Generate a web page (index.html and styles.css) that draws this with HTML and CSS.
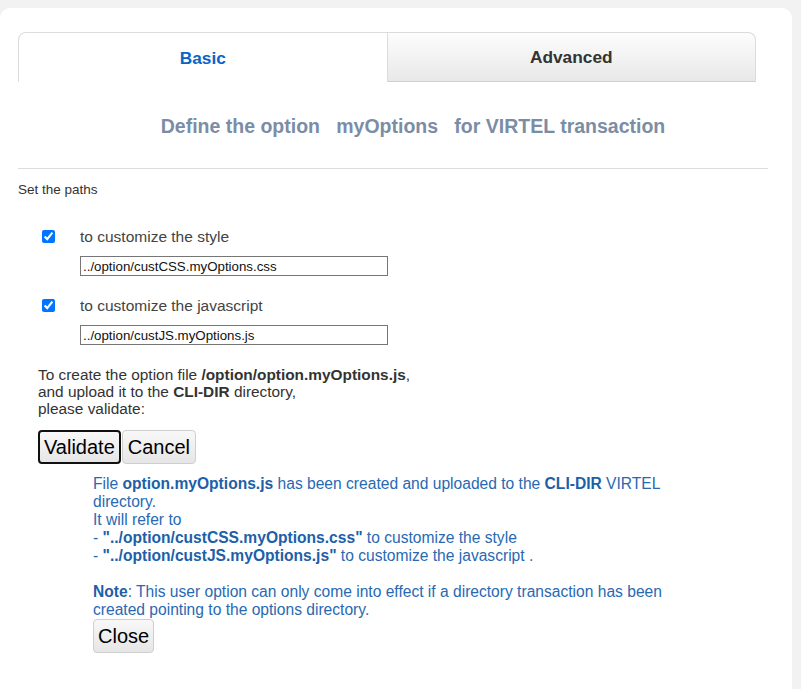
FILE: index.html
```html
<!DOCTYPE html>
<html lang="en">
<head>
<meta charset="utf-8">
<title>Define the option</title>
<link rel="stylesheet" href="styles.css">
</head>
<body>
<div class="page">
  <div class="panel">
    <div class="tabs">
      <div class="tab tab-active">Basic</div>
      <div class="tab tab-inactive">Advanced</div>
    </div>
    <h1 class="title">Define the option&nbsp;&nbsp; myOptions &nbsp;&nbsp;for VIRTEL transaction</h1>
    <hr class="rule">
    <p class="section">Set the paths</p>
    <div class="paths">
      <label class="path-row"><input type="checkbox" class="check" checked><span>to customize the style</span></label>
      <input type="text" class="path-input" value="../option/custCSS.myOptions.css">
      <label class="path-row"><input type="checkbox" class="check" checked><span>to customize the javascript</span></label>
      <input type="text" class="path-input" value="../option/custJS.myOptions.js">
    </div>
    <div class="create">
      <p class="intro">To create the option file <b>/option/option.myOptions.js</b>,<br>and upload it to the <b>CLI-DIR</b> directory,<br>please validate:</p>
      <div class="buttons">
        <button class="btn btn-focus">Validate</button><button class="btn btn-wide">Cancel</button>
      </div>
      <div class="result">
        <p class="msg">File <b>option.myOptions.js</b> has been created and uploaded to the <b>CLI-DIR</b> VIRTEL directory.<br>It will refer to<br>- <b>"../option/custCSS.myOptions.css"</b> to customize the style<br>- <b>"../option/custJS.myOptions.js"</b> to customize the javascript .<br><br><b>Note</b>: This user option can only come into effect if a directory transaction has been created pointing to the options directory.</p>
        <button class="btn">Close</button>
      </div>
    </div>
  </div>
</div>
</body>
</html>
```
FILE: styles.css
```css
html, body {
  margin: 0;
  padding: 0;
  background: #f2f2f2;
  font-family: "Liberation Sans", Arial, sans-serif;
  color: #333;
}

.page {
  padding: 8px 9px 0 0;
  height: 681px;
  overflow: hidden;
}

.panel {
  background: #fff;
  border-radius: 10px 10px 0 0;
  padding: 24px 24px 40px 18px;
  min-height: 640px;
}

.tabs {
  display: flex;
  width: 738px;
  height: 50px;
}

.tab {
  flex: 1;
  display: flex;
  align-items: center;
  justify-content: center;
  padding-top: 1px;
  font-size: 17.3px;
  font-weight: bold;
  box-sizing: border-box;
}

.tab-active {
  color: #0b63c4;
  border-top: 1px solid #dcdcdc;
  border-left: 1px solid #dcdcdc;
  border-top-left-radius: 8px;
  background: #fff;
}

.tab-inactive {
  color: #333;
  border: 1px solid #dcdcdc;
  border-bottom-color: #d0d0d0;
  border-top-right-radius: 8px;
  background: linear-gradient(#fdfdfd, #e8e8e8);
}

.title {
  margin: 33px 0 0;
  padding-left: 40px;
  text-align: center;
  font-size: 19.5px;
  line-height: 23px;
  font-weight: bold;
  color: #7b8da5;
}

.rule {
  margin: 30px 0 0;
  border: 0;
  border-top: 1px solid #dddddd;
  height: 0;
}

.section {
  margin: 13px 0 0;
  font-size: 13.5px;
  line-height: 15px;
  color: #333;
}

.paths {
  display: flex;
  flex-direction: column;
  align-items: flex-start;
  padding-top: 31px;
}

.path-row {
  display: flex;
  align-items: center;
  font-size: 15.5px;
  line-height: 17px;
  color: #444;
}

.path-row + .path-input + .path-row {
  margin-top: 21px;
}

.check {
  width: 13px;
  height: 13px;
  margin: 0 25px 0 24px;
}

.path-input {
  margin: 11px 0 0 62px;
  width: 308px;
  height: 20px;
  box-sizing: border-box;
  border: 1px solid #767676;
  padding: 1px 2px;
  font-family: "Liberation Sans", Arial, sans-serif;
  font-size: 13.3px;
  color: #111;
}

.create {
  padding-left: 20px;
  padding-top: 21px;
}

.intro {
  margin: 0;
  font-size: 15.4px;
  line-height: 17px;
  color: #333;
}

.buttons {
  display: flex;
  gap: 1px;
  margin-top: 13px;
}

.btn {
  height: 34px;
  padding: 0 4px;
  font-family: "Liberation Sans", Arial, sans-serif;
  font-size: 20px;
  color: #000;
  background: linear-gradient(#f8f8f8, #e6e6e6);
  border: 1px solid #cfcfcf;
  border-radius: 4px;
  box-sizing: border-box;
}

.btn-wide {
  padding: 0 5px;
}

.btn-focus {
  border: 2px solid #111;
}

.result {
  padding-left: 55px;
  margin-top: 11px;
  display: flex;
  flex-direction: column;
  align-items: flex-start;
}

.msg {
  margin: 0;
  width: 580px;
  font-size: 15.6px;
  line-height: 18px;
  color: #2869b3;
}

.msg b {
  color: #1d5fa8;
}
```
